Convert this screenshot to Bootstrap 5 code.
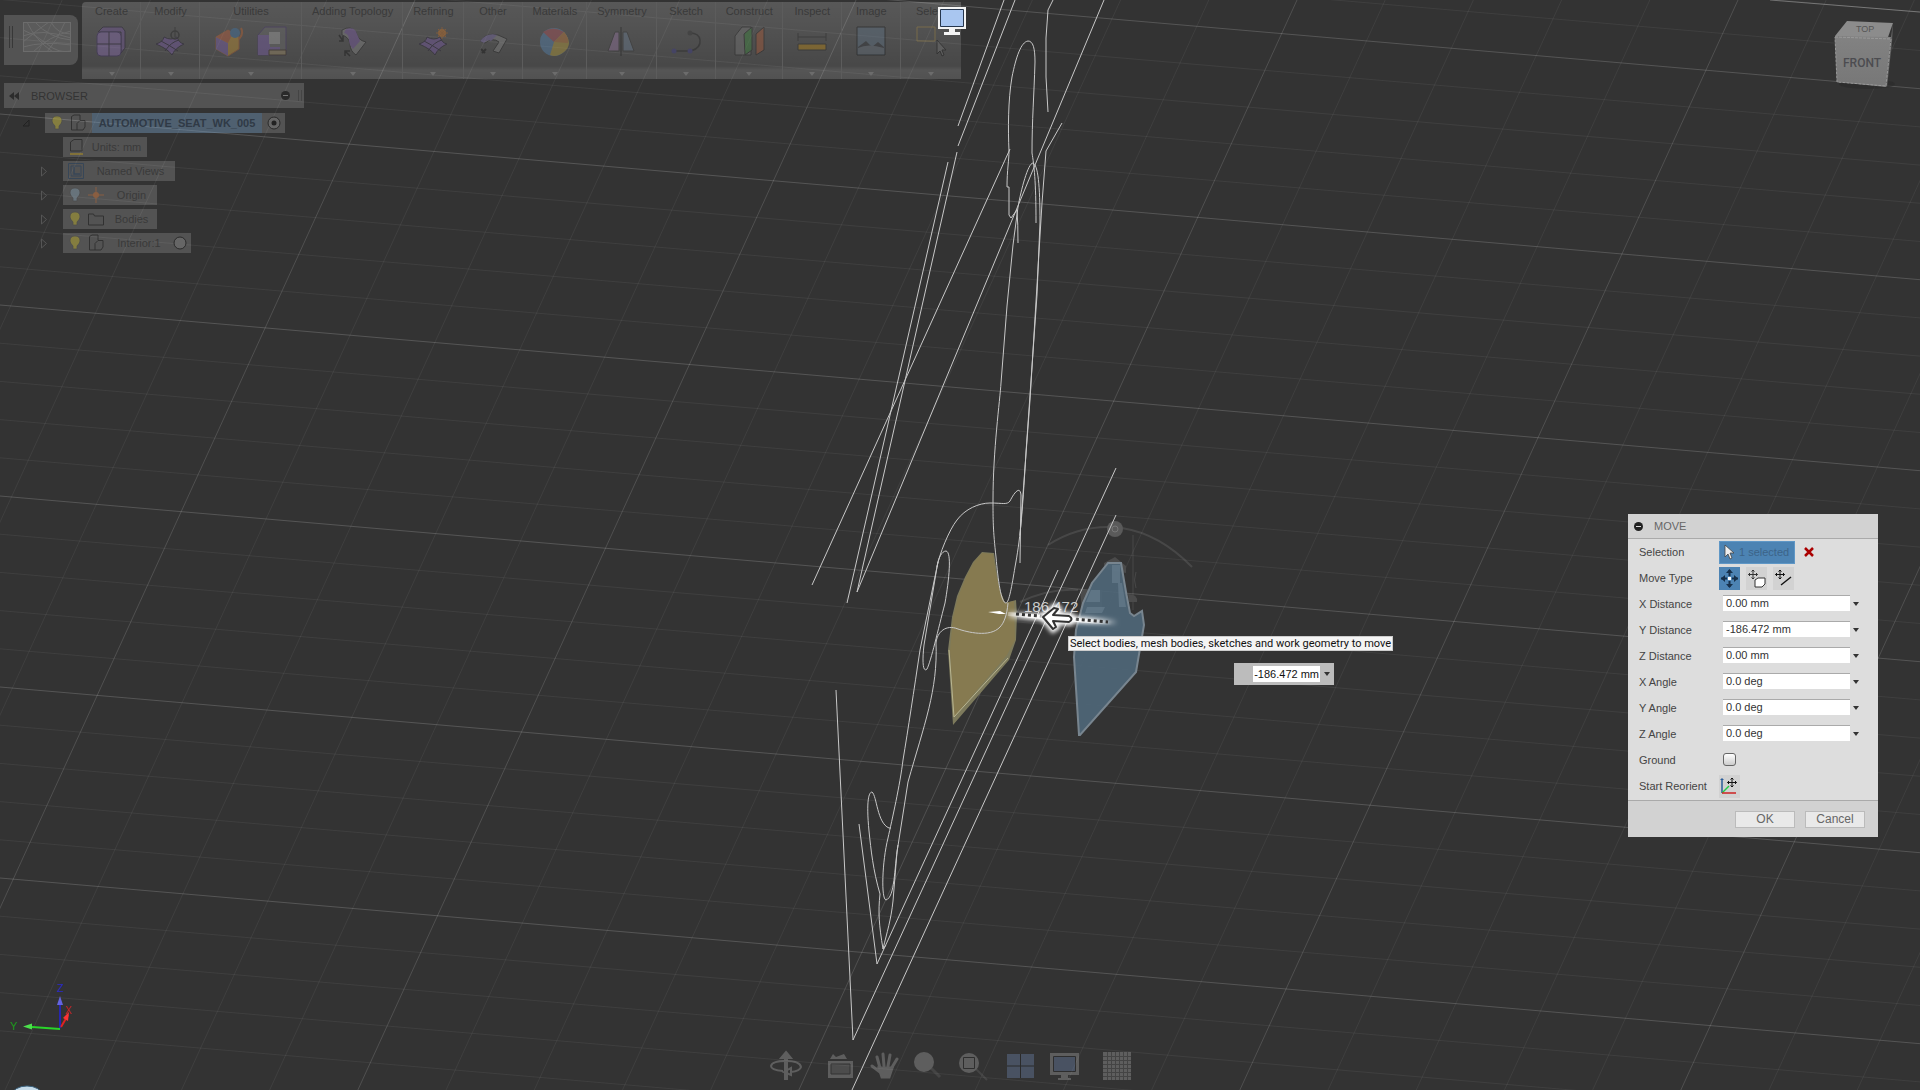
<!DOCTYPE html>
<html lang="en">
<head>
<meta charset="utf-8">
<meta name="viewport" content="width=device-width, initial-scale=1">
<title>AUTOMOTIVE_SEAT_WK_005</title>
<link rel="stylesheet" href="https://cdn.jsdelivr.net/npm/bootstrap@5.3.0/dist/css/bootstrap.min.css">
<script src="https://cdn.jsdelivr.net/npm/bootstrap@5.3.0/dist/js/bootstrap.bundle.min.js"></script>
<style>
  body { background: #333; font: 11px/16px "Liberation Sans", Arial, sans-serif; color: #3a3a3a; }
  svg { display: block; flex: none; }
  button { font: inherit; color: inherit; border: 0; background: none; padding: 0; }
  .scene { inset: 0; width: 100%; height: 100%; }
  .ghost { background: rgba(255,255,255,.16); }
  .top-bar { height: 79px; }

  .workspace { width: 74px; height: 50px; margin: 15px 4px 0; border-radius: 0 8px 8px 0; padding: 7px 6px 13px 5px; }
  .ribbon { margin-top: 2px; height: 77px; background: linear-gradient(rgba(255,255,255,.18), rgba(255,255,255,.16) 20px, rgba(255,255,255,.1) 64px, rgba(255,255,255,.17) 68px, rgba(255,255,255,.15)); border-radius: 4px 0 0 0; }
  .tool-group { min-width: 59px; padding: 1px 9px 3px 10px; border-right: 1px solid #5c5c5c; }
  .tool-group:last-child { border-right: 0; min-width: 60px; }
  .tool-icons { gap: 12px; padding: 7px 4px 0; opacity: .4; }
  .drop-mark { border: 3px solid transparent; border-top: 4px solid #6c6c6c; border-bottom: 0; }
  .display-badge { left: 37px; top: 5px; }
  .cube { margin: 20px 24px 0 auto; }

  .browser { margin: 4px 0 0 4px; width: 300px; }
  .browser-bar { height: 25px; padding: 0 2px 0 5px; gap: 12px; color: #333; }
  .browser-bar .gap-2 { margin-left: auto; }
  .tree { padding: 5px 0 0; gap: 4px; }
  .tree-row { height: 20px; gap: 15px; margin-left: 36px; }
  .tree-row.root { margin-left: 18px; }
  .tree-item { height: 20px; gap: 5px; }
  .tree-icons { opacity: .5; gap: 4px; }
  .root-name { background: rgba(70,125,180,.3); width: 170px; height: 20px; line-height: 20px; color: #303a46; }

  .move-panel { width: 250px; right: 42px; top: 514px; background: #ddd; color: #444; }
  .panel-head { height: 25px; background: #d2d2d2; border-bottom: 1px solid #aaa; padding: 0 6px; gap: 11px; color: #666; }
  .panel-body { padding: 0 10px 0 11px; height: 261px; }
  .form-line { height: 26px; }
  .form-line > label, .form-line > .line-label { width: 80px; }
  .picker { width: 76px; height: 23px; background: #4c83b3; border: 1px solid #5f97c6; color: #3c6488; gap: 4px; padding-left: 3px; }
  .kind { width: 21px; height: 23px; background: #d2d2d2; margin-right: 6px; }
  .kind.on { background: #4c83b3; }
  .value { width: 127px; height: 16px; border: 0; border-top: 1px solid #aaa; background: #fff; padding: 0 3px 1px; margin: 0 0 2px 4px; color: #333; }
  .arrow { border: 3px solid transparent; border-top: 4px solid #333; border-bottom: 0; margin-left: 3px; }
  .ground { appearance: none; width: 13px; height: 13px; margin: 0 0 2px 4px; border: 1px solid #666; border-radius: 3px; background: linear-gradient(#fff, #ccc); }
  .panel-foot { height: 37px; background: #d2d2d2; border-top: 1px solid #aaa; padding: 0 13px; gap: 10px; }
  .panel-foot button { width: 60px; height: 17px; background: #e9e9e9; border: 1px solid #bbb; font-size: 12px; line-height: 15px; color: #666; }

  .hint { left: 1068px; top: 636px; height: 15px; background: #f4f4f4; border: 1px solid #ccc; color: #111; font: 11px/13px Roboto, "Noto Sans", sans-serif; padding: 0 1px; white-space: nowrap; }
  .float-value { left: 1234px; top: 663px; width: 100px; height: 22px; background: #bcbcbc; padding-left: 19px; }
  .float-value input { width: 67px; height: 16px; border: 0; background: #fff; padding: 0 1px 1px 0; text-align: right; color: #111; }

  .nav-tools { margin: auto 0 6px 769px; gap: 16px; height: 36px; opacity: .25; }
  .nav-tools .zoom-tool { margin: 0 3px 0 -3px; }
</style>
</head>
<body class="overflow-hidden">
<main class="d-flex flex-column vh-100 position-relative">

<svg class="scene position-absolute" viewBox="0 0 1920 1090" preserveAspectRatio="xMidYMid slice" aria-label="Sketch canvas">
  <g id="grid" stroke="#fff" fill="none"></g>
  <g fill="none" stroke="#fff" stroke-opacity=".1" stroke-width="2">
    <path d="M1048 545Q1076 527 1108 527M1122 528Q1160 534 1192 567M1020 602Q1050 588 1078 590"/>
    <path d="M1133 535v75M1136 572q-3 8 0 16" stroke-width="1"/>
  </g>
  <path d="M982 552 994 553 997 573 1000 590 1005 603 1016 600 1017 615 1016 640 1009 660 953 725 948 650 952 617 957 596 965 577 973 562Z" fill="#7d7a5c"/>
  <path d="M982 553 993 554 996 573 1000 591 1005 603 1014 601 1015 640 1007 655 954 717 950 650 953 617 958 597 966 577 974 562Z" fill="#867a50"/>
  <path d="M949 650 954 717 1008 658" fill="none" stroke="#b9b590" stroke-width="1"/>
  <circle cx="1115" cy="529" r="8" fill="#5a5a5a"/><circle cx="1115" cy="529" r="3" fill="none" stroke="#777"/>
  <path d="M1104 563l11-6 11 9v7l-22-4zM1080 590h22v20h-20zM1128 594q10 0 9 8h-8z" fill="#4b4b4b"/>
  <g fill="none" stroke="#c8c8c8" stroke-width="1">
    <path d="M1004 0 958 126M1015 0 958 146M957 152 857 592M948 162 847 603M1010 149 812 585M1104 0 1035 165 857 592"/>
    <path d="M1007 187C1007 170 1009 160 1009 151 1008 130 1008 100 1012 77 1016 57 1021 42 1028 41 1033 41 1035 48 1035 62 1034 96 1032 120 1032 153 1034 165 1036 180 1036 223M1007 187h2v28l2 3 6-8q1 14 1 33"/>
    <path d="M1053 0 1048 10 1046 38V77L1048 112M1062 123 1046 151 1042 203 1030 400 1020 535"/>
    <path d="M993 500C993 450 1000 400 1001 383L1007 306 1013 245 1018 207C1021 190 1028 163 1033 163 1038 165 1040 185 1040 222L1037 295 1026 452C1022 520 1020 540 1015 567 1012 585 1009 603 1006 603 1001 603 998 580 996 557 993 530 993 520 993 500Z"/>
    <path d="M937 567C939 555 949 530 957 520 965 509 979 503 990 503 1003 503 1007 505 1010 501 1014 493 1020 485 1021 495L1020 563"/>
    <path d="M937 567C938 558 942 551 946 551 952 552 949 580 945 603 938 630 931 661 927 669 923 673 922 662 924 645Z"/>
    <path d="M938 562 920 650C914 690 908 730 903 760 900 785 892 820 888 838 882 862 881 899 886 900 895 897 894 870 898 845"/>
    <path d="M1008 603C1007 615 1004 623 1000 627 990 638 967 632 958 629 946 624 937 632 936 643 938 690 924 725 908 782L897 852 893 901C891 920 887 932 883 949 879 925 878 912 880 894 873 870 871 850 869 831 866 800 869 792 872 792 877 796 877 823 889 828L891 828"/>
    <path d="M859 824 877 964 1058 570M883 949l3-4M836 690 853 1040 1116 468M1116 515 852 1090"/>
  </g>
  <path d="M1108 563 1121 563 1126 592 1130 613 1134 616 1142 611 1144 625 1136 672 1080 735 1079 735 1074 657 1076 630 1083 603 1092 583Z" fill="#4f6779" fill-opacity=".9" stroke="#78858f" stroke-width="2"/>
  <path d="M1112 565h8v18h-8zM1118 583h4l4 24h-7zM1091 590h9v12h-14zM1087 607h18l-3 6h-17z" fill="#6b8191" opacity=".6"/>

  <text x="1024" y="612" font-size="15" fill="#ccc">186.472</text>
  <defs>
    <filter id="glow" x="-30%" y="-200%" width="160%" height="500%"><feGaussianBlur stdDeviation="2"/></filter>
    <linearGradient id="fade"><stop offset="0" stop-color="#fff" stop-opacity=".3"/><stop offset=".2" stop-color="#fff"/><stop offset=".7" stop-color="#fff"/><stop offset="1" stop-color="#fff" stop-opacity="0"/></linearGradient>
  </defs>
  <path d="M988 612l12-1 6 3-7 0z" fill="#fff"/>
  <path d="M1010 613 1118 621v3L1010 617Z" fill="url(#fade)" stroke="url(#fade)" stroke-width="3" filter="url(#glow)"/>
  <path d="M1008 614 1112 623" stroke="url(#fade)" stroke-width="4" opacity=".85"/>
  <path d="M1016 614 1108 622" stroke="#333" stroke-width="3" stroke-dasharray="3 3"/>
  <path d="M1043 617 1055 607 1058 609 1053 615 1070 616Q1074 619 1070 622L1053 621 1056 627 1053 629Z" stroke="#fff" stroke-width="7" fill="#fff" filter="url(#glow)"/>
  <path d="M1043 617 1054 608 1058 609 1053 615 1069 616Q1074 619 1069 622L1053 621 1056 627 1053 629Z" stroke="#333" stroke-width="2" fill="#fff" stroke-linejoin="round"/>

  <g stroke-width="2">
    <path d="M60 1028V1000" stroke="#2626b0"/><path d="M60 996l3 9h-6z" fill="#6464e0"/>
    <path d="M60 1029 32 1027" stroke="#29d529"/><path d="M23 1026.500l9-3v6z" fill="#4be04b"/>
    <path d="M61 1027 68 1015" stroke="#d22"/><path d="M69 1012l-1 9-5-3z" fill="#f33"/>
  </g>
  <g font-size="11"><text x="10" y="1030" fill="#1c9a1c">Y</text><text x="57" y="992" fill="#2a2ac0">Z</text><text x="65" y="1014" fill="#c22" font-size="10">X</text></g>
  <ellipse cx="27" cy="1095" rx="15" ry="9" fill="#c5dbe9" stroke="#3d6480"/>
</svg>

<header class="top-bar d-flex align-items-start position-relative">
  <button class="workspace ghost d-flex gap-2" aria-label="Workspace">
    <svg width="6" height="22" class="mt-1" stroke="#383838"><path d="M.5 0v22M3.500 0v22"/></svg>
    <svg width="48" height="30" fill="none" stroke="#6c6c6c"><rect x=".5" y=".5" width="47" height="29" fill="#fff" fill-opacity=".05"/><path d="M0 8q12 4 24 14t24 7M0 20Q14 8 26 0M10 30Q26 14 48 9M0 25q20-6 48-2M12 0q14 16 36 18M28 0q6 12 20 12M0 14q18-8 48 2M24 30Q36 16 42 0M4 0q8 18 26 30"/></svg>
  </button>
  <nav class="ribbon d-flex" id="ribbon" aria-label="Sculpt tools"></nav>
  <svg class="cube" width="62" height="70" aria-label="View cube">
    <defs><linearGradient id="soft" x2="0" y2="1"><stop offset="0" stop-color="#828282"/><stop offset="1" stop-color="#777"/></linearGradient></defs>
    <ellipse cx="33" cy="64" rx="28" ry="5" fill="#2a2a2a" opacity=".6"/>
    <path d="M1 16 13 1 59 3 53 20Z" fill="#8c8c8c"/><path d="M1 16 57 17 52 67 3 62Z" fill="url(#soft)"/><path d="M57 17 59 3 58 22 53 67 52 66Z" fill="#666"/><path d="M1 17 57 19 52 66 3 62Z" fill="none" stroke="#999" stroke-dasharray="3 1"/>
    <text x="22" y="12" font-size="9" fill="#555">TOP</text><text x="9" y="47" font-size="12" font-weight="500" fill="#4c4c50" font-family="Roboto">FRONT</text>
  </svg>
</header>

<aside class="browser position-relative">
  <div class="browser-bar ghost d-flex align-items-center">
    <svg width="10" height="8" fill="#2c2c2c"><path d="M5 0v8L0 4zM10 0v8L5 4z"/></svg>
    <span>BROWSER</span>
    <span class="d-flex gap-2 align-items-center">
      <svg width="9" height="9"><circle cx="4.500" cy="4.500" r="4.500" fill="#2a2a2a"/><path d="M2 4.500h5" stroke="#777"/></svg>
      <svg width="4" height="11" stroke="#444"><path d="M.5 0v11M3.500 0v11"/></svg>
    </span>
  </div>
  <div class="tree d-flex flex-column" id="tree"></div>
</aside>

<section class="move-panel position-absolute" aria-label="Move">
  <div class="panel-head d-flex align-items-center">
    <svg width="9" height="9"><circle cx="4.500" cy="4.500" r="4.500" fill="#222"/><path d="M2 4.500h5" stroke="#ddd"/></svg><span>MOVE</span>
  </div>
  <form class="panel-body">
    <div class="form-line d-flex align-items-center"><span class="line-label">Selection</span>
      <button type="button" class="picker d-flex align-items-center"><svg width="12" height="16"><path d="M2 1v12l3-3 2 5 2-1-2-5h4z" fill="#eee" stroke="#444" stroke-width=".8"/></svg>1 selected</button>
      <button type="button" class="ms-2" aria-label="Clear"><svg width="12" height="10" stroke="#a00" stroke-width="2.500"><path d="M2 1l8 8M10 1 2 9"/></svg></button>
    </div>
    <div class="form-line d-flex align-items-center"><span class="line-label">Move Type</span>
      <button type="button" class="kind on" aria-label="Free move"><svg width="21" height="23"><path d="M10.500 3v17M2 11.500h17" stroke="#16304a" stroke-width="2"/><path d="M10.500 2l3.500 4h-7zM10.500 21l3.500-4h-7zM2 11.500l4-3.500v7zM19 11.500l-4-3.500v7z" fill="#16304a"/><rect x="8" y="9" width="5" height="5" fill="#4c83b3"/><rect x="9" y="10" width="3" height="3" fill="#fff"/></svg></button>
      <button type="button" class="kind" aria-label="Move along body"><svg width="21" height="23" fill="none" stroke="#333"><path d="M7 3v9M2.500 7.500h9M5.500 4.500 7 3l1.500 1.500M5.500 10.500 7 12l1.500-1.500M4 6 2.500 7.500 4 9M10 6l1.500 1.500L10 9"/><path d="M9 13l3-2h7v6l-3 3H9z" fill="#fff"/></svg></button>
      <button type="button" class="kind" aria-label="Point to point"><svg width="21" height="23" fill="none" stroke="#111"><path d="M7 3v9M2.500 7.500h9M5.500 4.500 7 3l1.500 1.500M5.500 10.500 7 12l1.500-1.500M4 6 2.500 7.500 4 9M10 6l1.500 1.500L10 9"/><path d="M8 18l10-8" stroke-width="1.500"/></svg></button>
    </div>
    <div class="form-line d-flex align-items-center"><label for="xd">X Distance</label><input class="value" id="xd" value="0.00 mm"><span class="arrow"></span></div>
    <div class="form-line d-flex align-items-center"><label for="yd">Y Distance</label><input class="value" id="yd" value="-186.472 mm"><span class="arrow"></span></div>
    <div class="form-line d-flex align-items-center"><label for="zd">Z Distance</label><input class="value" id="zd" value="0.00 mm"><span class="arrow"></span></div>
    <div class="form-line d-flex align-items-center"><label for="xa">X Angle</label><input class="value" id="xa" value="0.0 deg"><span class="arrow"></span></div>
    <div class="form-line d-flex align-items-center"><label for="ya">Y Angle</label><input class="value" id="ya" value="0.0 deg"><span class="arrow"></span></div>
    <div class="form-line d-flex align-items-center"><label for="za">Z Angle</label><input class="value" id="za" value="0.0 deg"><span class="arrow"></span></div>
    <div class="form-line d-flex align-items-center"><label for="gr">Ground</label><input class="ground" type="checkbox" id="gr"></div>
    <div class="form-line d-flex align-items-center"><span class="line-label">Start Reorient</span>
      <button type="button" class="kind" aria-label="Start Reorient"><svg width="21" height="23" fill="none"><path d="M3 18V4" stroke="#2a5d9a" stroke-width="1.500"/><path d="M3 18 10 11" stroke="#2c4" stroke-width="1.500"/><path d="M3 18h14" stroke="#c22" stroke-width="1.500"/><path d="M1 5l2-2 2 2z" fill="#2a5d9a"/><path d="M13 3v9M8.500 7.500h9M11.500 4.500 13 3l1.500 1.500M11.500 10.500 13 12l1.500-1.500M10 6 8.500 7.500 10 9M16 6l1.500 1.500L16 9" stroke="#111"/></svg></button>
    </div>
  </form>
  <div class="panel-foot d-flex align-items-center justify-content-end">
    <button type="button">OK</button><button type="button">Cancel</button>
  </div>
</section>

<div class="hint position-absolute" role="tooltip">Select bodies, mesh bodies, sketches and work geometry to move</div>
<div class="float-value position-absolute d-flex align-items-center"><input aria-label="Distance" value="-186.472 mm"><span class="arrow ms-auto me-1"></span></div>

<nav class="nav-tools position-relative d-flex align-items-center" aria-label="Navigation">
  <button aria-label="Orbit"><svg width="34" height="32" fill="none" stroke="#ddd" stroke-width="2"><path d="M14 21Q2 20 2 16 3 11 17 11t15 6q-1 4-10 5M22 18v7l-7-3z"/><path d="M17 30V7" stroke-width="4"/><path d="M17 2l5 6H12z" fill="#ddd"/></svg></button>
  <button class="ms-2" aria-label="Look at"><svg width="27" height="28"><path d="M1 9h25v17H1zM3 7l3-5 3 3 8-3 3 5z" fill="#ddd"/><path d="M4 12h19v10H4z" fill="#999" stroke="#333"/></svg></button>
  <button aria-label="Pan"><svg width="30" height="30" fill="none" stroke="#ddd" stroke-width="3" stroke-linecap="round"><path d="M10 17 7 6M14 15l-1-12M18 15l2-11M21 18l6-10M10 21 2 15"/><path d="M9 17h13l-3 9h-7z" fill="#ddd"/></svg></button>
  <button class="zoom-tool" aria-label="Zoom"><svg width="29" height="30"><path d="M18 17l9 9" stroke="#777" stroke-width="3"/><circle cx="11" cy="11" r="10" fill="#ddd"/></svg></button>
  <button class="zoom-tool" aria-label="Fit"><svg width="30" height="30"><path d="M18 18l11 11" stroke="#777" stroke-width="2"/><circle cx="11" cy="12" r="10" fill="#ddd"/><path d="M5.500 6.500h11v11h-11z" stroke="#222" fill="none"/></svg></button>
  <button aria-label="Viewports"><svg width="27" height="24"><path d="M0 0h27v24H0z" fill="#8ab0f0"/><path d="M13.500 0v24M0 12h27" stroke="#111"/></svg></button>
  <button aria-label="Display settings"><svg width="29" height="29"><path d="M0 1h29v22H0zM11 23h7v3h3v2H8v-2h3z" fill="#ddd"/><path d="M3.500 4.500h22v15h-22z" fill="#8ab0f0" stroke="#222"/></svg></button>
  <button class="ms-2" aria-label="Grid settings"><svg width="28" height="28"><path d="M0 0h28v28H0z" fill="#ddd"/><path d="M4.500 0v28M8.500 0v28M12.500 0v28M16.500 0v28M20.500 0v28M24.500 0v28M0 4.500h28M0 8.500h28M0 12.500h28M0 16.500h28M0 20.500h28M0 24.500h28" stroke="#777"/></svg></button>
</nav>
</main>

<script>
  // Ground grid: two families of parallel lines, every fifth one is a major line.
  let lines = '';
  for (let i = -6; i < 30; i++) {
    const y = 114 + (i - 5) * 38.2;
    lines += `<path d="M0 ${y}L1920 ${y + 1920 * 0.0863}" stroke-opacity="${i % 5 === 0 ? 0.17 : 0.06}"/>`;
  }
  for (let i = -5; i < 30; i++) {
    const x = -26 + i * 88.2;
    lines += `<path d="M${x} 0L${x - 1090 * 0.457} 1090" stroke-opacity="${i % 5 === 0 ? 0.14 : 0.06}"/>`;
  }
  lines += '<path d="M1770 0L1920 12" stroke-opacity=".3"/>';
  document.getElementById('grid').innerHTML = lines;

  const sheet = '<path d="M1 18Q8 16 9 11q7 4 13 0 2 6 7 7Q20 22 17 29 13 23 1 18Z" fill="#7a5aa8" stroke="#221c30"/><path d="M6 15q8 4 17 10M24 14q-8 2-14 11" stroke="#221c30" fill="none"/>';
  const icons = {
    box: '<path d="M7 1h19l3 4v17l-4 5V6H2z" fill="#76589c" stroke="#221c30"/><rect x="1" y="6" width="24" height="24" rx="4" fill="#8f70b8" stroke="#3d2a66"/><path d="M13 6v24M1 18h24" stroke="#221c30"/>',
    modify: sheet + '<path d="M20 1v10" stroke="#222"/><circle cx="20" cy="9" r="4" fill="none" stroke="#222" stroke-width="1.500"/>',
    cube: '<path d="M2 11 14 4l11 7v12l-11 7-12-7z" fill="#c9962e" stroke="#b5602a"/><path d="M2 11l12 6v13L2 23z" fill="#8060b0"/><path d="M2 11 14 4l5 3-5 10z" fill="#c5603a"/><circle cx="21" cy="7" r="5" fill="#3f77a8"/><path d="M27 2q3 6-2 11" stroke="#c0622c" stroke-width="2" fill="none"/>',
    shell: '<path d="M1 9 8 1h21v28H1z" fill="#6b6b6b" stroke="#443070"/><path d="M1 9h12v12h10v8H1z" fill="#7d5fae"/><path d="M12 6h11v12H12z" fill="#aaa"/><path d="M12 24h17v5H12z" fill="#a5916a" stroke="#3a2c1c"/>',
    bridge: '<path d="M5 4q9-5 14 2 1 8 10 10L19 29q-6-4-6-11-1-7-8-9z" fill="#8a8a8a" stroke="#222"/><path d="M9 3q9-3 11 5l3 7-7 8q-4-4-4-9 0-6-5-7z" fill="#7d5aa8"/><path d="M2 9l4 6M2 15h4v-5M8 25l5 5M8 30v-5h5" stroke="#111" stroke-width="1.500" fill="none"/>',
    refine: sheet + '<circle cx="24" cy="7" r="4" fill="#d97a20"/><path d="M24 1v12M18 7h12M20 3l8 8M28 3l-8 8" stroke="#c06a20"/>',
    other: '<path d="M2 15Q9 6 20 9l9 4-8 14-6-2 6-9q-6-5-14 1z" fill="#8a8a8a" stroke="#222"/><path d="M2 15Q9 6 19 9l-6 6q-4-2-7 2z" fill="#7a6aa8"/><path d="M3 23l4 4M8 23l-4 4" stroke="#111" stroke-width="2"/>',
    wheel: '<circle cx="15" cy="16" r="14" fill="#5486b5"/><path d="M15 16 4 6Q14-1 25 6z" fill="#b05058"/><path d="M15 16 25 6q10 12 0 20-8 6-14 3z" fill="#bda238"/><path d="M15 16 25 6q5 6 4 11z" fill="#c77b38"/>',
    mirror: '<path d="M13 6H9L2 25h11z" fill="#9a78a5" stroke="#333"/><path d="M17 6h4l7 19H17z" fill="#6d8096" stroke="#333"/><path d="M15 1v29" stroke="#111"/>',
    sketch: '<path d="M4 25h16q10-3 9-11-1-7-10-7" fill="none" stroke="#222" stroke-width="1.500"/><circle cx="19" cy="7" r="2.500" fill="#333"/><circle cx="3" cy="25" r="2.500" fill="#3c3a88"/><circle cx="19" cy="25" r="2.500" fill="#3c3a88"/>',
    planes: '<path d="M1 10 8 1h9v28H1z" fill="#777" stroke="#222"/><path d="M10 8 18 1v23l-7 5z" fill="#3d8a3d" stroke="#222"/><path d="M22 8l8-7v23l-8 5z" fill="#b05a36" stroke="#222"/>',
    ruler: '<path d="M1 7v8M29 7v8M1 11h28" stroke="#222"/><path d="M1 18h28v6H1z" fill="#c08a10" stroke="#222"/>',
    image: '<path d="M1 1h28v28H1z" fill="#5f7488" stroke="#111"/><path d="M2 21l8-6 6 6 6-5 6 5v7H2z" fill="#30343a"/><path d="M2 22q10-5 26 0v6H2z" fill="#66727e"/>',
    select: '<path d="M1 1h18v14H1z" fill="none" stroke="#b09040"/><path d="M21 14v14l3-3 2 5 2-1-2-5h4z" fill="#777" stroke="#111"/>'
  };
  const groups = [['Create','box'],['Modify','modify'],['Utilities','cube','shell'],['Adding Topology','bridge'],['Refining','refine'],['Other','other'],['Materials','wheel'],['Symmetry','mirror'],['Sketch','sketch'],['Construct','planes'],['Inspect','ruler'],['Image','image'],['Select','select']];
  const badge = '<svg class="display-badge position-absolute" width="28" height="29"><path d="M0 0h28v22H0zM11 22h6v3h5v3H6v-3h5z" fill="#f4f4f4"/><path d="M2.500 2.500h23v17h-23z" fill="#a9c6f0" stroke="#26364d"/></svg>';
  document.getElementById('ribbon').innerHTML = groups.map(([name, ...ic]) =>
    `<div class="tool-group position-relative d-flex flex-column align-items-center"><span class="text-nowrap">${name}</span>
     <div class="tool-icons d-flex">${ic.map(k => `<button aria-label="${name}"><svg width="31" height="31">${icons[k]}</svg></button>`).join('')}</div>
     <span class="drop-mark mt-auto"></span>${name === 'Select' ? badge : ''}</div>`).join('');

  const bulb = c => `<svg width="16" height="18"><path d="M8 2q5 0 5 5 0 2-3 5v3H6v-3Q3 9 3 7q0-5 5-5z" fill="${c}" stroke="#444" stroke-width=".7"/></svg>`;
  const part = '<svg width="18" height="18" fill="none" stroke="#111"><path d="M2.500 2.500 5 1h6v5M2.500 2.500V16H8M8 9.500l3-3h5V13l-2 3H8z"/></svg>';
  const svg = inner => `<svg width="18" height="18" fill="none">${inner}</svg>`;
  const rows = [
    ['Units: mm', 84, svg('<path d="M3.500 4 7 1.500h8V13H3.500z" stroke="#111"/><path d="M3 16h13" stroke="#b09020" stroke-width="2"/>'), 0],
    ['Named Views', 112, svg('<path d="M1.500 1.500h15v15h-15zM4 4h10v10H4z" stroke="#1c3a5c"/><path d="M7 5v7h6" stroke="#1c3a5c" stroke-width="1.500"/>'), 1],
    ['Origin', 94, bulb('#7c93a3') + svg('<path d="M9 1v16M1 9h16" stroke="#c06a30"/><circle cx="9" cy="9" r="3" fill="#c06a30"/>'), 1],
    ['Bodies', 94, bulb('#b5a82c') + svg('<path d="M1.500 15V4h5l1 2h9v9z" stroke="#111"/>'), 1],
    ['Interior:1', 128, bulb('#b5a82c') + part, 1]
  ];
  const tri = '<svg width="8" height="11"><path d="M1.500 1v9l5-4.500z" fill="none" stroke="#555"/></svg>';
  const ring = dot => `<svg width="14" height="14"><circle cx="7" cy="7" r="6" fill="#666" stroke="#2a2a2a"/>${dot ? '<circle cx="7" cy="7" r="2.500" fill="#222"/>' : ''}</svg>`;
  document.getElementById('tree').innerHTML =
    `<div class="tree-row root d-flex align-items-center"><svg width="8" height="8"><path d="M7 1v6H1z" fill="none" stroke="#222"/></svg>
       <div class="tree-item ghost d-flex align-items-center px-1"><span class="tree-icons d-flex">${bulb('#b5a82c')}${part}</span><strong class="root-name text-center">AUTOMOTIVE_SEAT_WK_005</strong>${ring(1)}</div></div>` +
    rows.map(([n, w, ic, t]) => `<div class="tree-row d-flex align-items-center">${t ? tri : '<svg width="8" height="11"></svg>'}
       <div class="tree-item ghost d-flex align-items-center px-1" style="width:${w}px"><span class="tree-icons d-flex">${ic}</span><span class="flex-grow-1 text-center">${n}</span>${n[0] === 'I' ? ring(0) : ''}</div></div>`).join('');
</script>
</body>
</html>
